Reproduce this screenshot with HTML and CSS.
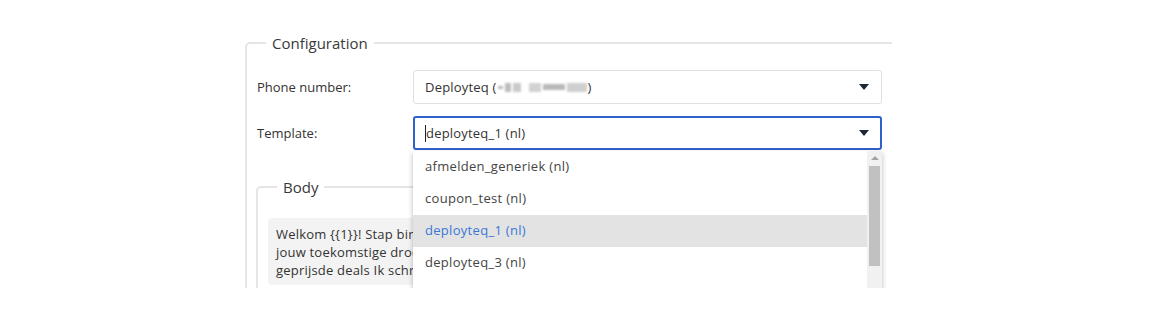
FILE: index.html
```html
<!DOCTYPE html>
<html lang="nl">
<head>
<meta charset="utf-8">
<title>Configuration</title>
<link rel="stylesheet" href="styles.css">
</head>
<body>
<div class="panel">
  <fieldset class="group">
    <legend class="group-title">Configuration</legend>
    <div class="row">
      <label class="row-label">Phone number:</label>
      <div class="select">
        <span class="select-value">Deployteq (<span class="blur"><i class="b1"></i><i class="b2"></i><i class="b3"></i><i class="b4"></i><i class="b5"></i><i class="b6"></i></span>)</span>
        <span class="caret"></span>
      </div>
    </div>
    <div class="row row-second">
      <label class="row-label">Template:</label>
      <div class="select select-open">
        <span class="select-value"><span class="text-cursor"></span>deployteq_1 (nl)</span>
        <span class="caret"></span>
        <div class="dropdown">
          <ul class="options">
            <li class="option">afmelden_generiek (nl)</li>
            <li class="option">coupon_test (nl)</li>
            <li class="option option-active">deployteq_1 (nl)</li>
            <li class="option">deployteq_3 (nl)</li>
            <li class="option">deployteq_test (nl)</li>
          </ul>
          <div class="scrollbar">
            <span class="scroll-up"></span>
            <span class="scroll-thumb"></span>
          </div>
        </div>
      </div>
    </div>
    <fieldset class="group group-body">
      <legend class="group-title">Body</legend>
      <div class="message">Welkom {{1}}! Stap binnen in de wereld van Deployteq en ontdek<br>jouw toekomstige droomhuis met onze scherp<br>geprijsde deals Ik schrijf je graag in voor de nieuwsbrief.</div>
    </fieldset>
  </fieldset>
</div>
</body>
</html>
```

FILE: styles.css
```css
* { box-sizing: border-box; }

html, body {
  margin: 0;
  padding: 0;
  background: #ffffff;
}

body {
  font-family: "Open Sans", "Liberation Sans", sans-serif;
  color: #333333;
}

.panel {
  margin-left: 245px;
  width: 647px;
  height: 288px;
  padding-top: 33px;
  overflow: hidden;
}

.group {
  margin: 0;
  width: 690px;
  border: 2px solid #e5e5e5;
  border-radius: 5px;
  padding: 17px 10px 0 10px;
  min-width: 0;
}

.group-title {
  margin-left: 9px;
  padding: 0 6px;
  font-size: 15px;
  line-height: 20px;
  color: #3a3a3a;
}

.row {
  display: flex;
  align-items: center;
  width: 625px;
  height: 34px;
}

.row-second {
  margin-top: 12px;
}

.row-label {
  width: 156px;
  flex: none;
  font-size: 13px;
  color: #333333;
}

.select {
  position: relative;
  flex: 1;
  height: 34px;
  border: 1px solid #e0e0e0;
  border-radius: 3px;
  display: flex;
  align-items: center;
  padding: 0 11px;
  font-size: 13px;
  letter-spacing: 0.2px;
  color: #333333;
}

.select-open {
  border: 2px solid #2f62c8;
  padding: 0 10px;
}

.select-value {
  flex: 1;
  display: flex;
  align-items: center;
  white-space: nowrap;
}

.text-cursor {
  display: inline-block;
  width: 1px;
  height: 17px;
  background: #222222;
}

.caret {
  width: 0;
  height: 0;
  border-left: 5px solid transparent;
  border-right: 5px solid transparent;
  border-top: 6px solid #1e2833;
  margin-right: 1px;
}

.blur {
  display: inline-flex;
  align-items: center;
  gap: 2px;
  height: 12px;
  margin: 0 1px;
  filter: blur(0.8px);
}

.blur i {
  display: inline-block;
  height: 9px;
  background: #c4c4c4;
}

.blur .b1 { width: 5px; height: 3px; background: #b8b8b8; }
.blur .b2 { width: 6px; background: #bdbdbd; }
.blur .b3 { width: 8px; background: #cacaca; margin-right: 6px; }
.blur .b4 { width: 12px; background: #d2d2d2; }
.blur .b5 { width: 22px; height: 6px; background: #b9b9b9; }
.blur .b6 { width: 20px; background: #cfcfcf; }

.dropdown {
  position: absolute;
  left: -2px;
  top: 33px;
  width: 469px;
  height: 170px;
  background: #ffffff;
  box-shadow: 0 2px 5px rgba(0, 0, 0, 0.28);
  display: flex;
  z-index: 2;
}

.options {
  list-style: none;
  margin: 0;
  padding: 0;
  flex: 1;
}

.option {
  height: 32px;
  line-height: 30px;
  padding-left: 12px;
  font-size: 13px;
  letter-spacing: 0.3px;
  color: #444444;
}

.option-active {
  background: #e3e3e3;
  color: #3a78d6;
}

.scrollbar {
  width: 15px;
  flex: none;
  background: #f1f1f1;
  display: flex;
  flex-direction: column;
  align-items: center;
}

.scroll-up {
  margin-top: 5px;
  width: 0;
  height: 0;
  border-left: 4px solid transparent;
  border-right: 4px solid transparent;
  border-bottom: 4px solid #a3a3a3;
}

.scroll-thumb {
  margin-top: 6px;
  width: 11px;
  height: 100px;
  background: #c1c1c1;
}

.group-body {
  width: 612px;
  margin: 27px 0 0 -1px;
  padding: 21px 10px 10px 10px;
  border-width: 2px;
}

.message {
  background: #f3f3f3;
  border-radius: 4px;
  padding: 7px 7px 6px 8px;
  font-size: 13px;
  line-height: 18px;
  letter-spacing: 0.2px;
  color: #333333;
  white-space: nowrap;
  overflow: hidden;
}
```
